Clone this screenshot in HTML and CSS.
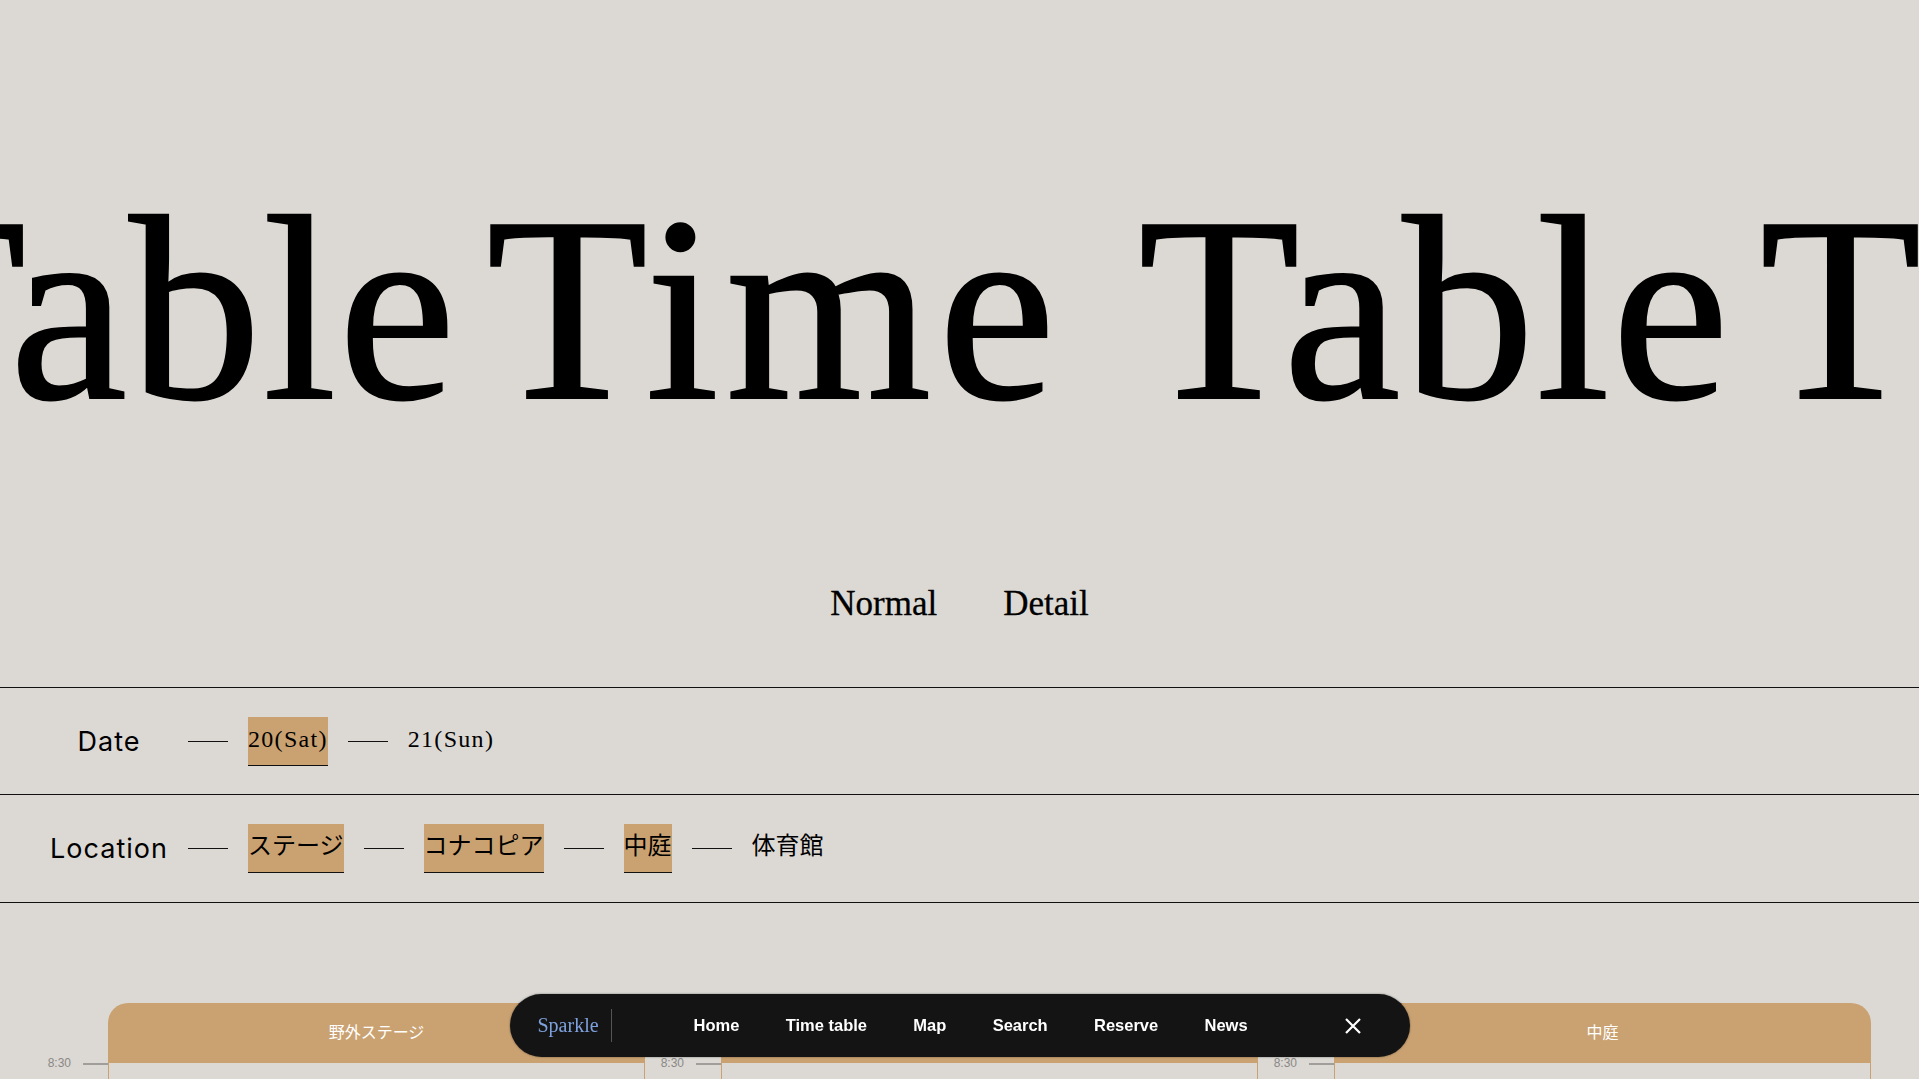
FILE: index.html
```html
<!DOCTYPE html>
<html lang="ja">
<head>
<meta charset="utf-8">
<title>Time Table</title>
<link rel="stylesheet" href="styles.css">
</head>
<body>
<header class="hero">
  <div class="marquee">
    <span class="word w-table">Table</span>
    <span class="word w-time">Time</span>
    <span class="word w-table">Table</span>
    <span class="word w-time">Time</span>
    <span class="word w-table">Table</span>
  </div>
</header>

<div class="tabs">
  <span class="tab">Normal</span>
  <span class="tab">Detail</span>
</div>

<section class="filters">
  <div class="filter-row">
    <div class="filter-label">Date</div>
    <div class="opts">
      <span class="dash"></span>
      <span class="opt opt-date selected">20(Sat)</span>
      <span class="dash"></span>
      <span class="opt opt-date">21(Sun)</span>
    </div>
  </div>
  <div class="filter-row">
    <div class="filter-label">Location</div>
    <div class="opts">
      <span class="dash"></span>
      <span class="opt selected">ステージ</span>
      <span class="dash"></span>
      <span class="opt selected">コナコピア</span>
      <span class="dash"></span>
      <span class="opt selected">中庭</span>
      <span class="dash"></span>
      <span class="opt">体育館</span>
    </div>
  </div>
</section>

<section class="schedule">
  <div class="column">
    <div class="spacer"></div>
    <div class="card-head">野外ステージ</div>
    <div class="axis">
      <div class="mark"><span class="time">8:30</span><span class="tick"></span></div>
      <div class="mark"><span class="time">9:00</span><span class="tick"></span></div>
      <div class="mark"><span class="time">9:30</span><span class="tick"></span></div>
    </div>
    <div class="card-body"></div>
  </div>
  <div class="column">
    <div class="spacer"></div>
    <div class="card-head">コナコピア</div>
    <div class="axis">
      <div class="mark"><span class="time">8:30</span><span class="tick"></span></div>
      <div class="mark"><span class="time">9:00</span><span class="tick"></span></div>
      <div class="mark"><span class="time">9:30</span><span class="tick"></span></div>
    </div>
    <div class="card-body"></div>
  </div>
  <div class="column">
    <div class="spacer"></div>
    <div class="card-head">中庭</div>
    <div class="axis">
      <div class="mark"><span class="time">8:30</span><span class="tick"></span></div>
      <div class="mark"><span class="time">9:00</span><span class="tick"></span></div>
      <div class="mark"><span class="time">9:30</span><span class="tick"></span></div>
    </div>
    <div class="card-body"></div>
  </div>
</section>

<nav class="navbar">
  <span class="brand">Sparkle</span>
  <span class="divider"></span>
  <ul class="links">
    <li>Home</li>
    <li>Time table</li>
    <li>Map</li>
    <li>Search</li>
    <li>Reserve</li>
    <li>News</li>
  </ul>
  <span class="close" aria-label="close">
    <svg width="18" height="18" viewBox="0 0 18 18"><path d="M2 2 L16 16 M16 2 L2 16" stroke="#ffffff" stroke-width="2.2" fill="none" stroke-linecap="butt"/></svg>
  </span>
</nav>
</body>
</html>
```

FILE: styles.css
```css
html, body {
  margin: 0;
  padding: 0;
}
body {
  background: #dcd9d4;
  color: #000;
  overflow: hidden;
  font-family: "Liberation Serif", "Noto Sans CJK JP", serif;
}

/* hero marquee */
.hero {
  overflow: hidden;
  padding-top: 177px;
}
.marquee {
  display: flex;
  white-space: nowrap;
  margin-left: -135px;
  font-family: "Liberation Serif", serif;
  font-size: 264px;
  line-height: 264px;
  height: 264px;
  color: #000;
  -webkit-text-stroke: 2px #000;
}
.word { flex: none; }
.w-time { margin-right: 76px; letter-spacing: 7px; }
.w-table { margin-right: 29px; letter-spacing: 2px; }

/* tabs */
.tabs {
  margin-top: 143px;
  display: flex;
  justify-content: center;
  gap: 66px;
  font-family: "Liberation Serif", serif;
  font-size: 35px;
  line-height: 40px;
  height: 40px;
  -webkit-text-stroke: 0.3px #000;
}

/* filters */
.filters {
  margin-top: 63px;
  border-top: 1px solid #111;
}
.filter-row {
  display: flex;
  align-items: center;
  padding: 29px 0 28px;
  border-bottom: 1px solid #111;
}
.filter-row + .filter-row { padding-bottom: 29px; }
.filter-label {
  width: 158px;
  padding-left: 30px;
  text-align: center;
  font-family: Inter, "Noto Sans", sans-serif;
  font-size: 27px;
  letter-spacing: 1px;
  line-height: 30px;
}
.opts {
  display: flex;
  align-items: center;
  gap: 20px;
}
.dash {
  width: 40px;
  height: 1px;
  background: #111;
}
.opt {
  height: 48px;
  line-height: 44px;
  font-family: "Liberation Serif", "Noto Sans CJK JP", serif;
  font-size: 24px;
  border-bottom: 1px solid transparent;
  white-space: nowrap;
}
.opt-date { letter-spacing: 1.3px; }
.opt.selected {
  background: #caa272;
  border-bottom-color: #111;
}

/* schedule */
.schedule {
  display: flex;
  padding: 100px 0 0 32px;
}
.column {
  display: grid;
  grid-template-columns: 76px 537px;
  grid-template-rows: 60px auto;
}
.card-head {
  background: #caa272;
  border-radius: 20px 20px 0 0;
  color: #fff;
  font-family: "Noto Sans CJK JP", sans-serif;
  font-size: 16px;
  display: flex;
  align-items: center;
  justify-content: center;
  padding-bottom: 5px;
  box-sizing: border-box;
}
.axis {
  display: flex;
  flex-direction: column;
  margin-top: -8px;
}
.mark {
  display: flex;
  align-items: flex-start;
  justify-content: flex-end;
  height: 60px;
}
.time {
  font-family: "Liberation Sans", sans-serif;
  font-size: 12px;
  line-height: 16px;
  color: #8a8886;
  margin-right: 12px;
}
.tick {
  width: 25px;
  height: 2px;
  margin-top: 8px;
  background: #a09e9b;
}
.card-body {
  height: 700px;
  border-left: 1px solid #caa272;
  border-right: 1px solid #caa272;
}

/* nav */
.navbar {
  position: fixed;
  left: calc(50% - 450px);
  bottom: 22px;
  width: 900px;
  height: 63px;
  box-sizing: border-box;
  background: #141414;
  border-radius: 32px;
  box-shadow: 0 0 2px rgba(0,0,0,0.5);
  display: flex;
  align-items: center;
  padding: 0 48px 0 28px;
}
.brand {
  font-family: "Liberation Serif", serif;
  font-size: 20px;
  color: #7ea1de;
}
.divider {
  width: 1px;
  height: 33px;
  background: #555;
  margin-left: 12px;
}
.links {
  list-style: none;
  margin: 0 0 0 82px;
  padding: 0;
  display: flex;
  gap: 46.3px;
  font-family: "Liberation Sans", sans-serif;
  font-weight: bold;
  font-size: 16.5px;
  color: #fff;
}
.close {
  margin-left: auto;
  display: flex;
  width: 18px;
  height: 18px;
}
```
